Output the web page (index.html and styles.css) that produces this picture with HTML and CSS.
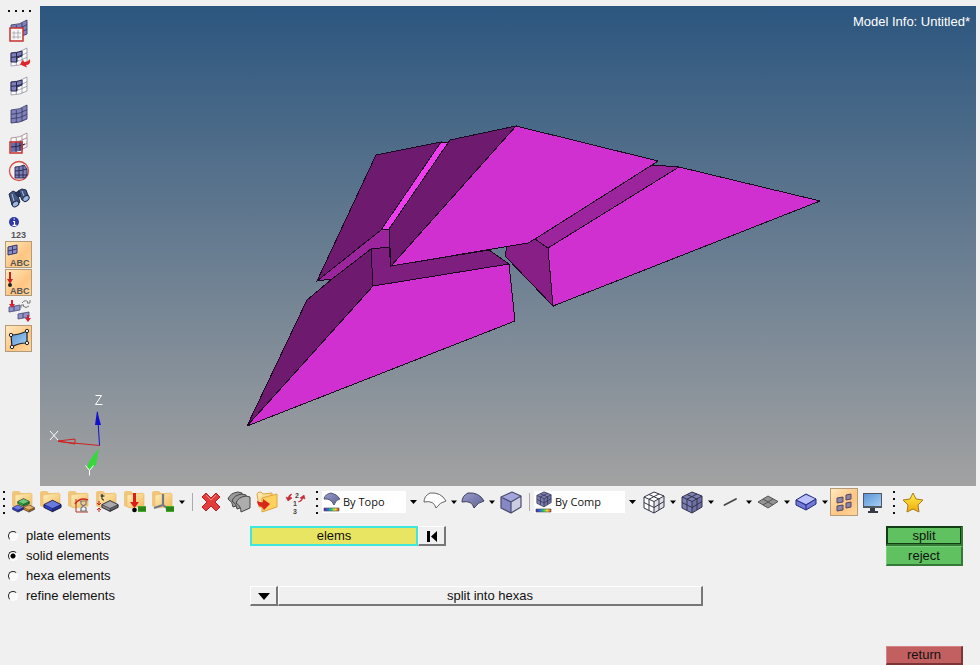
FILE: index.html
```html
<!DOCTYPE html>
<html lang="en">
<head>
<meta charset="utf-8">
<title>Model Info: Untitled*</title>
<link rel="stylesheet" href="styles.css">
</head>
<body>
<svg class="defs" width="0" height="0" aria-hidden="true">
  <defs>
    <linearGradient id="g-folder" x1="0" y1="0" x2="1" y2="1"><stop offset="0" stop-color="#fff0bd"/><stop offset="1" stop-color="#f0b95c"/></linearGradient>
    <linearGradient id="g-blue" x1="0" y1="0" x2="1" y2="1"><stop offset="0" stop-color="#5c94d6"/><stop offset="1" stop-color="#a5d0f5"/></linearGradient>
    <linearGradient id="g-surf" x1="0" y1="0" x2="1" y2="1"><stop offset="0" stop-color="#9a9bd0"/><stop offset="1" stop-color="#5f628f"/></linearGradient>
    <linearGradient id="g-star" x1="0" y1="0" x2="0" y2="1"><stop offset="0" stop-color="#fff04a"/><stop offset="1" stop-color="#f0a90c"/></linearGradient>
    <linearGradient id="g-rainbow"><stop offset="0" stop-color="#6a1bb0"/><stop offset=".25" stop-color="#2a6cf0"/><stop offset=".5" stop-color="#2fd060"/><stop offset=".75" stop-color="#f2e23a"/><stop offset="1" stop-color="#e83a20"/></linearGradient>
    <symbol id="folder" viewBox="0 0 28 28">
      <path d="M3 5q0-2 2-2h5l2 2h9q1 0 1 1v12l-14 2-5-2z" fill="#f0c67c"/>
      <path d="M6 7l15-2 2 1v12l-14 2-3-2z" fill="url(#g-folder)" stroke="#e9bd72" stroke-width=".7"/>
    </symbol>
    <symbol id="brick" viewBox="0 0 20 14">
      <path d="M1 5.500L10 1l9 4.500v3L10 13 1 8.500z" fill="currentColor" stroke="#1b1b30" stroke-linejoin="round"/>
      <path d="M1.500 5.500L10 1.500l8.500 4L10 9.500z" fill="#fff" opacity=".3"/>
      <path d="M10 9.700l9-4.200v3L10 13z" opacity=".25"/>
      <path d="M1 5.500l9 4.200 9-4.200M10 9.700V13" fill="none" stroke="#1b1b30" stroke-width=".6"/>
    </symbol>
    <symbol id="down" viewBox="0 0 10 28"><path d="M2 12.500h6l-3 3.500z"/></symbol>
    <symbol id="mesh" viewBox="0 0 27 27">
      <path d="M6 9Q15 9 22 4v14q-7 4-16 4z" fill="currentColor"/>
      <path d="M6 9Q15 9 22 4v14q-7 4-16 4zM6 13.300q9 0 16-4.600M6 17.700q9 0 16-4.400M11.300 9v12.500M17 7v13.500" fill="none" stroke="#3c3d66" stroke-width=".9"/>
    </symbol>
    <symbol id="meshcut" viewBox="0 0 27 27">
      <path d="M6 9Q15 9 22 4v14q-7 4-16 4z" fill="#fafafa" stroke="#85859a" stroke-width=".7"/>
      <path d="M11.300 9v12.500M17 7v13.500M6 17.700q9 0 16-4.400M17 11q3-1 5-2.500" fill="none" stroke="#85859a" stroke-width=".7"/>
      <path d="M6 9q6 0 11-2v5l-5 2v4H6z" fill="#7d80b8" stroke="#25264f"/>
      <path d="M6 13.300q6 0 11-2M11.500 9v9" fill="none" stroke="#25264f"/>
    </symbol>
    <symbol id="meshcube" viewBox="0 0 28 28">
      <path d="M4 9l10-5 10 4v11l-10 6-10-5z" fill="currentColor"/>
      <path d="M14 14l10-6v11l-10 6z" fill="#111140" opacity=".13"/>
      <path d="M4 9l10-5 10 4v11l-10 6-10-5zM4 9l10 4.500L24 8M14 13.500V25M9 6.500l10 4.500v11M19 6L9 11.200v11.300M4 14.500l10 5 10-6" fill="none" stroke="#333348" stroke-linejoin="round"/>
    </symbol>
  </defs>
</svg>

<main class="workspace">
  <nav class="sidebar" aria-label="Display">
    <div class="grip-h"></div>
    <button aria-label="Mask"><svg viewBox="0 0 27 27"><use href="#mesh" class="c-mesh" y="-1"/><path d="M5 11h13v13H5z" fill="#fbf6f6" stroke="#c6302d" stroke-width="1.500"/><path d="M9 14v8m4-9v9M7 16h9M7 20h9" stroke="#8f9ba5" stroke-width=".7"/></svg></button>
    <button aria-label="Reverse mask"><svg viewBox="0 0 27 27"><use href="#meshcut" y="-1"/><path d="M25 14q1 6-4 6l1 2.500-7-3 3-5 1 2.500q4 0 6-3z" fill="#e0242b"/></svg></button>
    <button aria-label="Unmask adjacent"><svg viewBox="0 0 27 27"><use href="#meshcut"/></svg></button>
    <button aria-label="Unmask all"><svg viewBox="0 0 27 27"><use href="#mesh" class="c-mesh"/></svg></button>
    <button aria-label="Mask not shown"><svg viewBox="0 0 27 27"><path d="M6 9Q15 9 22 4v14q-7 4-16 4zM6 13.300q9 0 16-4.600M17 17q3-1 5-3M11.300 9v12.500M17 7v13.500" fill="#fafafa" stroke="#a08088" stroke-width=".8"/><path d="M6 14q6 0 12-2v9q-6 2-12 2z" fill="#6a6da8"/><path d="M6 18q7 0 14-3M11 13v10M15 12v10" stroke="#27284f" fill="none"/><path d="M5 13h12v11H5z" fill="none" stroke="#c6302d" stroke-width="1.500"/></svg></button>
    <button aria-label="Spherical clipping"><svg viewBox="0 0 27 27"><circle cx="14" cy="14" r="9.500" fill="#f7eeee" stroke="#cf4b49" stroke-width="1.300"/><path d="M10 10q5 0 9-2l3 4v6l-2 3H10z" fill="#7d80b8"/><path d="M10 10q5 0 9-2l3 4v6l-2 3H10zM10 14q6 0 12-2M10 18h12M14 10v11M18 9v12" fill="none" stroke="#25264f" stroke-width=".9"/></svg></button>
    <button aria-label="Find"><svg viewBox="0 0 27 27"><g stroke="#1f2a4d" stroke-linejoin="round"><path d="M4 9l4-3 4 2 3 9-4 4-4-1z" fill="#42547f"/><path d="M13 6l4-2 4 1 3 8-3 3-4-1z" fill="#42547f"/><path d="M10 8l4-2 2 5-3 1z" fill="#2a3658"/><ellipse cx="10.500" cy="19" rx="3.500" ry="2.500" fill="#9db8dd" transform="rotate(-30 10.500 19)"/><ellipse cx="21" cy="13.500" rx="3.500" ry="2.500" fill="#9db8dd" transform="rotate(-40 21 13.500)"/></g><path d="M7 9l2 7M17 6l2 5" stroke="#a8bfe0"/></svg></button>
    <button aria-label="Numbers"><svg viewBox="0 0 27 27"><circle cx="9" cy="9" r="5" fill="#3038a8"/><path d="M8 8.500h1.500V12M7.500 12.300h4M8.500 6h1.500" stroke="#fff" stroke-width="1.200" fill="none"/><text x="6" y="25" class="tag">123</text></svg></button>
    <button class="on" aria-label="Element labels"><svg viewBox="0 0 27 27"><path d="M3 6l9-2v8l-9 2z" fill="#8b8fc6"/><path d="M3 6l9-2v8l-9 2zM7.500 5v8M3 10l9-2" fill="none" stroke="#35396b"/><text x="5" y="25" class="tag">ABC</text></svg></button>
    <button class="on" aria-label="Load labels"><svg viewBox="0 0 27 27"><path d="M4 3h2v7h2l-3 5-3-5h2z" fill="#cf1f20"/><circle cx="5" cy="16" r="2" fill="#222"/><text x="5" y="25" class="tag">ABC</text></svg></button>
    <button aria-label="Load handles"><svg viewBox="0 0 27 27"><path d="M4 10l11-2v5L4 15zM13 17l11-2v5l-11 2z" fill="#8f93c9" stroke="#454872" stroke-width=".8"/><path d="M9 9v5M18 16v5" stroke="#454872"/><path d="M6 3h2v4h2l-3 4-3-4h2zM22 18h2v3h2l-3 4-3-4h2z" fill="#cf2435"/><path d="M17 6q3-4 6-1l-1 1h3V3M24 9q-3 3-6 0l1-1h-3v3" fill="none" stroke="#777"/></svg></button>
    <button class="on" aria-label="Fixed points"><svg viewBox="0 0 27 27"><path d="M6 10q8 0 16-4v12q-9 0-15 4z" fill="url(#g-blue)" stroke="#222" stroke-width="1.200"/><g fill="#eee" stroke="#222"><circle cx="6" cy="10" r="1.700"/><circle cx="22" cy="6" r="1.700"/><circle cx="22" cy="18" r="1.700"/><circle cx="7" cy="22" r="1.700"/></g></svg></button>
  </nav>

  <section class="viewport" aria-label="Model">
    <p class="model-info">Model Info: Untitled*</p>
    <svg class="scene" viewBox="40 6 936 480">
      <g class="edges">
        <path class="mid" d="M317 281L381 230 389 229 389 247 371 249 332 279z"/>
        <path class="dark" d="M376 155L441 142 381 230 317 281z"/>
        <path class="hot" d="M441 142L449 142 389 229 381 230z"/>
        <path class="deep" d="M371 249L389 247 391 266 489 250 509 264 373 286z"/>
        <path class="dark" d="M371 249L373 286 247 426 307 300 332 279z"/>
        <path class="face" d="M373 286L509 264 515 321 247 426z"/>
        <path class="side" d="M507 246L528 243 535 239 548 248 553 306 505 256z"/>
        <path class="mid" d="M652 165L679 167 548 248 535 239z"/>
        <path class="face" d="M679 167L820 201 553 306 548 248z"/>
        <path class="face" d="M516 126L658 161 652 165 535 239 528 243 391 266z"/>
        <path class="dark" d="M450 140L516 126 391 266 389 229z"/>
      </g>
      <g class="axes">
        <path d="M99.500 445.500L58 441.500" stroke="#d02020"/><path d="M58 441l17-2v5z" fill="none" stroke="#d02020"/>
        <path d="M99.500 445.500L97.500 412" stroke="#1010d0"/><path d="M97 411l4 14h-6z" fill="#1010d0"/>
        <path d="M99 448l-3 17-7 5-2-3 3-7z" fill="#36d83e"/>
        <path d="M50 431l8 9m0-9l-8 9M95.500 395.500h6l-6 9h7M85.500 465.500l4 5 4-5m-4 5v5" fill="none" stroke="#fff"/>
      </g>
    </svg>
  </section>
</main>

<div class="toolbar" role="toolbar">
  <div class="grip"></div>
  <button aria-label="Assemblies"><svg viewBox="0 0 28 28"><use href="#folder"/><use href="#brick" x="3" y="16" width="12" height="9" class="c-blue"/><use href="#brick" x="14" y="16" width="12" height="9" class="c-orange"/><use href="#brick" x="8" y="10" width="13" height="9" class="c-green"/></svg></button>
  <button aria-label="Components"><svg viewBox="0 0 28 28"><use href="#folder"/><use href="#brick" x="6" y="11" width="19" height="14" class="c-blue"/></svg></button>
  <button aria-label="Properties"><svg viewBox="0 0 28 28"><use href="#folder"/><path d="M10 16q5-7 13-4" fill="none" stroke="#d0281e" stroke-width="1.500"/><path d="M11 11v13h12" fill="none" stroke="#b3332b"/><path d="M15 13h7M15 23h7M16 13v3l5 4v3M21 13v3l-5 4v3" stroke="#777" stroke-width="1.200" fill="#eee"/></svg></button>
  <button aria-label="Materials"><svg viewBox="0 0 28 28"><use href="#folder"/><use href="#brick" x="8" y="11" width="18" height="14" class="c-gray"/><path d="M9 6v5q0 1 2 1M7.500 8h4" stroke="#111" fill="none"/><path d="M6 13v4m-2-2l2 2 2-2M6 24v-4m-2 2l2-2 2 2" stroke="#c02020" fill="none"/></svg></button>
  <button aria-label="Load collectors"><svg viewBox="0 0 28 28"><use href="#folder"/><path d="M12 5h3v9h3l-4.500 6L9 14h3z" fill="#db1d18"/><circle cx="13.500" cy="22" r="2.300"/><path d="M17 18h8v6h-8z" fill="#47ac25"/><path d="M17 20h8m-8 2h8" stroke="#165c0c"/></svg></button>
  <button aria-label="System collectors"><svg viewBox="0 0 28 28"><use href="#folder"/><path d="M14 6v11m0 0l-9 3m9-3l5 4" stroke="#737986" stroke-width="2.200" fill="none"/><path d="M17 18h8v6h-8z" fill="#47ac25"/><path d="M17 20h8m-8 2h8" stroke="#165c0c"/></svg></button>
  <button class="more" aria-label="More collectors"><svg viewBox="0 0 10 28"><use href="#down"/></svg></button>
  <div class="rule"></div>
  <button aria-label="Delete"><svg viewBox="0 0 28 28"><path d="M5 9l4-4 5 5 5-5 4 4-5 5 5 5-4 4-5-5-5 5-4-4 5-5z" fill="#e23c3c" stroke="#b81f24" stroke-linejoin="round"/><path d="M9 7l5 5 5-5" stroke="#f58a83" fill="none"/></svg></button>
  <button aria-label="Card edit"><svg viewBox="0 0 28 28"><g fill="#9a9a9a" stroke="#444" stroke-linejoin="round"><path d="M3 11q2-6 10-7l4 1v11l-9 3q0-5-5-8z"/><path d="M7 13q2-6 10-7l4 1v11l-9 3q0-5-5-8z"/><path d="M11 15q2-6 10-7l4 1v11l-9 4q0-6-5-9z" fill="#adadad"/></g></svg></button>
  <button aria-label="Organize"><svg viewBox="0 0 28 28"><path d="M4 6q0-2 4-2l2 2 9-1v14H6z" fill="url(#g-folder)" stroke="#dca443"/><path d="M9 10l15-4v13l-15 5z" fill="#ffd25f" stroke="#e0a53e"/><path d="M4 13q4 2 6 1v-3l7 5-6 6-2-3q-5-1-5-6z" fill="#d9281a"/></svg></button>
  <button aria-label="Renumber"><svg viewBox="0 0 28 28"><g class="num"><text x="14" y="10">2</text><text x="12" y="18">1</text><text x="12" y="26">3</text></g><path d="M11 6q-3 0-4 4l-2-1 2 4 4-3-2-1M17 14q4 0 5-4l2 1-1-4-4 3 2 1" fill="#c92732" stroke="#c92732" stroke-width=".6"/></svg></button>
  <div class="grip grip-mid"></div>
  <label class="combo combo-a"><svg class="combo-icon" viewBox="0 0 20 22"><path d="M2 8q1-5 7-6 6 1 9 6-4 0-6 6Q9 7 2 8z" fill="url(#g-surf)" stroke="#555975"/><path d="M2 17h15v3H2z" fill="url(#g-rainbow)" stroke="#444" stroke-width=".6"/></svg><select aria-label="Geometry color mode"><option>By Topo</option></select><svg class="combo-arrow" viewBox="0 0 15 22"><path d="M4 9h7l-3.500 4z"/></svg></label>
  <button aria-label="Wireframe geometry"><svg viewBox="0 0 28 28"><path d="M3 14Q3 8 9 5q11-1 16 8-6 1-10 7-2-8-12-6z" fill="#fff" stroke="#666"/></svg></button>
  <button class="more" aria-label="Wireframe options"><svg viewBox="0 0 10 28"><use href="#down"/></svg></button>
  <button aria-label="Shaded geometry"><svg viewBox="0 0 28 28"><path d="M3 14Q3 8 9 5q11-1 16 8-6 1-10 7-2-8-12-6z" fill="url(#g-surf)" stroke="#3c3e58"/></svg></button>
  <button class="more" aria-label="Shading options"><svg viewBox="0 0 10 28"><use href="#down"/></svg></button>
  <button aria-label="Transparency"><svg viewBox="0 0 28 28"><path d="M4 9l11-5 9 4-10 6z" fill="#a3a6dd"/><path d="M4 9l10 5v11L4 20z" fill="#8588c4"/><path d="M14 14l10-6v11l-10 6z" fill="#cccde0"/><path d="M4 9l11-5 9 4v11l-10 6-10-5zM4 9l10 5 10-6M14 14v11" fill="none" stroke="#484b70" stroke-width="1.200" stroke-linejoin="round"/></svg></button>
  <div class="rule rule-narrow"></div>
  <label class="combo combo-b"><svg class="combo-icon" viewBox="0 0 20 22"><use href="#meshcube" x="0" y="-2" width="20" height="20" class="c-cube"/><path d="M2 18h15v3H2z" fill="url(#g-rainbow)" stroke="#444" stroke-width=".6"/></svg><select aria-label="Element color mode"><option>By Comp</option></select><svg class="combo-arrow" viewBox="0 0 15 22"><path d="M4 9h7l-3.500 4z"/></svg></label>
  <button aria-label="Wireframe elements"><svg viewBox="0 0 28 28"><use href="#meshcube" class="c-white"/></svg></button>
  <button class="more" aria-label="Wireframe element options"><svg viewBox="0 0 10 28"><use href="#down"/></svg></button>
  <button aria-label="Shaded elements"><svg viewBox="0 0 28 28"><use href="#meshcube" class="c-cube"/></svg></button>
  <button class="more" aria-label="Shaded element options"><svg viewBox="0 0 10 28"><use href="#down"/></svg></button>
  <button aria-label="1D elements"><svg viewBox="0 0 28 28"><path d="M8.500 17L20 11" stroke="#484848" stroke-width="1.800" stroke-linecap="round"/></svg></button>
  <button class="more" aria-label="1D options"><svg viewBox="0 0 10 28"><use href="#down"/></svg></button>
  <button aria-label="2D elements"><svg viewBox="0 0 28 28"><path d="M4 14l10-6 10 5.500L14 20z" fill="#939393" stroke="#555"/><path d="M9 11l10 6M19 11L9 17" stroke="#555"/></svg></button>
  <button class="more" aria-label="2D options"><svg viewBox="0 0 10 28"><use href="#down"/></svg></button>
  <button aria-label="3D elements"><svg viewBox="0 0 28 28"><path d="M4 12l10-6 10 5v5l-10 6-10-5z" fill="#7379d6" stroke="#202878" stroke-linejoin="round"/><path d="M5 12l9-5 9 4-9 5z" fill="#bdc2fb"/><path d="M4 12l10 5 10-6M14 17v5" fill="none" stroke="#202878"/></svg></button>
  <button class="more" aria-label="3D options"><svg viewBox="0 0 10 28"><use href="#down"/></svg></button>
  <button class="on" aria-label="Shrink elements"><svg viewBox="0 0 28 28"><path d="M7 10l6-1v5l-6 1zM16 7l5-1v5l-5 1zM7 18l6-1v5l-6 1zM16 15l5-1v5l-5 1z" fill="#8b85a8" stroke="#554660"/></svg></button>
  <button aria-label="Visualization options"><svg viewBox="0 0 28 28"><path d="M5 5h19v15H5z" fill="#4e5965"/><path d="M6 6h17v12H6z" fill="url(#g-blue)"/><path d="M12 20h5v3h3v2H10v-2h2z" fill="#343b43"/></svg></button>
  <div class="grip grip-mid"></div>
  <button aria-label="Favorites"><svg viewBox="0 0 28 28"><path d="M14 5l3 6 7 1-5 5 1 7-6-3-6 3 1-7-5-5 7-1z" fill="url(#g-star)" stroke="#a87b1c" stroke-linejoin="round"/></svg></button>
</div>

<form class="panel">
  <fieldset class="modes">
    <label><input type="radio" name="mode">plate elements</label>
    <label><input type="radio" name="mode" checked>solid elements</label>
    <label><input type="radio" name="mode">hexa elements</label>
    <label><input type="radio" name="mode">refine elements</label>
  </fieldset>
  <div class="inputs">
    <div class="row">
      <button type="button" class="selector">elems</button>
      <button type="button" class="raised small" aria-label="Reset selection"><svg viewBox="0 0 14 14"><path d="M2 2h3v11H2zM12 2v11L6 7.500z"/></svg></button>
    </div>
    <div class="row">
      <button type="button" class="raised small" aria-label="Choose method"><svg viewBox="0 0 14 14"><path d="M1 4h12L7 11z"/></svg></button>
      <button type="button" class="raised wide">split into hexas</button>
    </div>
  </div>
  <div class="actions">
    <button type="button" class="go primary">split</button>
    <button type="button" class="go">reject</button>
    <button type="button" class="back">return</button>
  </div>
</form>
</body>
</html>
```
FILE: styles.css
```css
* { box-sizing: border-box; }

body {
  margin: 0;
  min-height: 100vh;
  display: flex;
  flex-direction: column;
  background: #f0f0f0;
  color: #111;
  font: 13px/20px "Liberation Sans", Arial, sans-serif;
}

.defs { position: absolute; }

button {
  margin: 0;
  padding: 0;
  border: 0;
  background: none;
  color: inherit;
  font: inherit;
}

svg { display: block; }

/* workspace */
.workspace {
  flex: 1;
  display: flex;
  padding: 6px 4px 0 0;
}

.sidebar {
  width: 40px;
  padding-left: 5px;
  display: flex;
  flex-direction: column;
  gap: 1px;
}
.sidebar button { width: 27px; height: 27px; }

.on {
  border: 1px solid #b59a77;
  background: linear-gradient(135deg, #ffe9bd, #ffc583 60%, #ffd69b);
}
.on svg { margin: -1px; }
.sidebar .on svg { width: 27px; }
.toolbar .on svg { width: 28px; }

/* dotted drag handles */
.grip {
  width: 9px;
  height: 23px;
  padding-left: 3px;
}
.grip::before {
  content: "";
  display: block;
  width: 2px;
  height: 23px;
  background: repeating-linear-gradient(#111 0 2px, transparent 2px 7px);
}
.grip-mid { width: 13px; padding-left: 7px; }
.grip-h {
  width: 23px;
  height: 2px;
  margin: 4px 0 4px 3px;
  background: repeating-linear-gradient(90deg, #111 0 2px, transparent 2px 7px);
}

.viewport {
  flex: 1;
  position: relative;
  background: linear-gradient(#2c567f, #a2a2a2);
}
.scene { width: 100%; height: 100%; }
.model-info {
  position: absolute;
  top: 6px;
  right: 6px;
  margin: 0;
  color: #fff;
}

.edges { stroke: #1c0720; stroke-width: 1; shape-rendering: crispEdges; }
.face { fill: #d030d0; }
.dark { fill: #6e1a6e; }
.deep { fill: #7e1f80; }
.side { fill: #871f87; }
.mid { fill: #9c249c; }
.hot { fill: #ef3bef; }

.c-mesh { color: #8083bb; }
.c-white { color: #fff; }
.c-cube { color: #7c7fb5; }
.c-blue { color: #2c3fd6; }
.c-orange { color: #dd9227; }
.c-green { color: #2db83a; }
.c-gray { color: #858585; }
.tag { font-size: 9px; font-weight: bold; fill: #555; }
.num { font-size: 7px; font-weight: bold; fill: #444; }

/* toolbar */
.toolbar {
  display: flex;
  align-items: center;
  padding: 2px 0;
}
.toolbar > * { flex: none; }
.toolbar button { width: 28px; height: 28px; }
.toolbar .more { width: 10px; }
.rule {
  width: 10px;
  height: 18px;
  background: linear-gradient(#aaa, #aaa) center / 1px 100% no-repeat;
}
.rule-narrow { width: 9px; }
.combo {
  display: flex;
  height: 22px;
  background: #fff;
}
.combo-a { width: 99px; }
.combo-b { width: 106px; }
.combo-icon { width: 20px; }
.combo select {
  flex: 1;
  min-width: 0;
  appearance: none;
  border: 0;
  padding: 0 0 0 1px;
  background: none;
  color: #111;
  font: 11px/22px "Open Sans", "Noto Sans", sans-serif;
}
.combo-arrow { width: 15px; background: #f0f0f0; }

/* panel */
.panel {
  display: grid;
  grid-template-columns: 242px minmax(0, 453px) 1fr;
  padding: 8px 17px 0 8px;
}
.modes {
  margin: 0;
  padding: 0;
  border: 0;
}
.modes label {
  display: flex;
  align-items: center;
  gap: 8px;
}
.modes input {
  appearance: none;
  margin: 0;
  width: 10px;
  height: 10px;
  border: 1px solid;
  border-color: #222 #fff #fff #222;
  border-radius: 50%;
  background: #fafafa;
}
.modes input:checked { background: radial-gradient(circle, #000 2px, #fafafa 3px); }

.inputs {
  display: grid;
  grid-template-rows: 20px 20px;
  row-gap: 40px;
  align-content: start;
}
.row { display: flex; }
.selector {
  width: 168px;
  height: 20px;
  border: 2px solid #3ee6dc;
  background: #e8e562;
  line-height: 16px;
}
.raised {
  height: 20px;
  border: solid;
  border-width: 1px 2px 2px 1px;
  border-color: #fff #777 #777 #fff;
  line-height: 16px;
}
.small { width: 28px; }
.small svg { width: 14px; margin: 0 auto; }
.wide { flex: 1; }

.actions {
  width: 77px;
  justify-self: end;
  display: grid;
  grid-template-rows: 20px 20px 80px 19px;
}
.go, .back {
  border: solid;
  border-width: 1px 2px 2px 1px;
  line-height: 16px;
}
.go { background: #5fc160; border-color: #7bd07b #347a36 #347a36 #7bd07b; }
.primary {
  border-color: #123d14 #347a36 #347a36 #123d14;
  box-shadow: inset 0 0 0 1px #123d14;
}
.back { grid-row: 4; background: #c25f60; border-color: #d58384 #7c3435 #7c3435 #d58384; }
```
